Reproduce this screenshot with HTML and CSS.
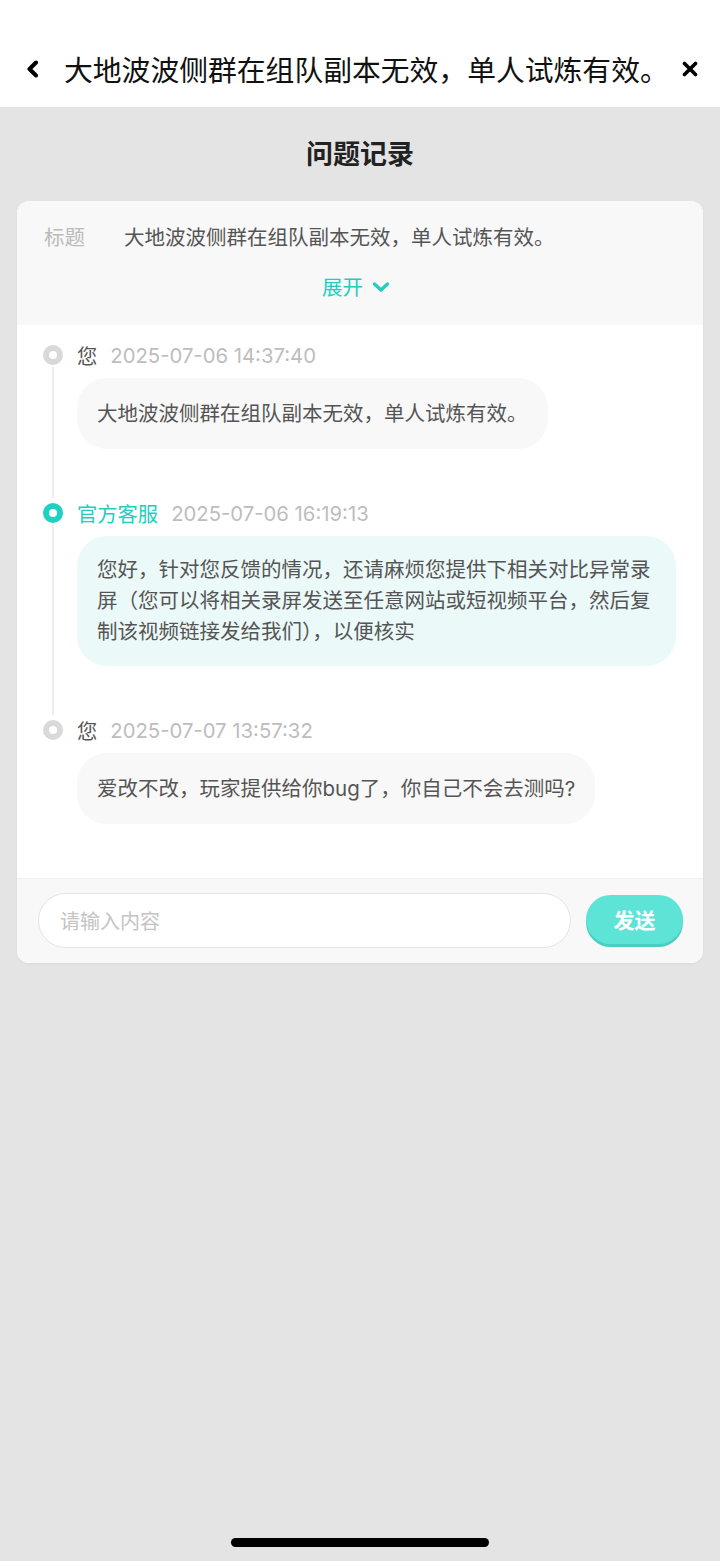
FILE: index.html
```html
<!DOCTYPE html>
<html lang="zh-CN">
<head>
<meta charset="utf-8">
<title>问题记录</title>
<link rel="stylesheet" href="styles.css">
</head>
<body>
<div class="page">
  <header class="topbar">
    <svg class="icon-back" width="14" height="18" viewBox="0 0 14 18"><polyline points="10,2.5 3.5,9 10,15.5" fill="none" stroke="#000" stroke-width="4" stroke-linecap="round" stroke-linejoin="round"/></svg>
    <div class="topbar-title">大地波波侧群在组队副本无效，单人试炼有效。</div>
    <svg class="icon-close" width="16" height="16" viewBox="0 0 16 16"><path d="M2.5 2.5 L13.5 13.5 M13.5 2.5 L2.5 13.5" fill="none" stroke="#000" stroke-width="3.6" stroke-linecap="round"/></svg>
  </header>

  <h1 class="section-heading">问题记录</h1>

  <section class="card">
    <div class="card-summary">
      <div class="summary-row">
        <span class="summary-label">标题</span>
        <span class="summary-text">大地波波侧群在组队副本无效，单人试炼有效。</span>
      </div>
      <div class="expand">
        <span>展开</span>
        <svg width="18" height="12" viewBox="0 0 18 12"><polyline points="2.5,3 9,9 15.5,3" fill="none" stroke="#22cdbf" stroke-width="3.4" stroke-linecap="round" stroke-linejoin="round"/></svg>
      </div>
    </div>

    <div class="timeline">
      <div class="entry">
        <div class="rail"><span class="dot"></span><span class="line"></span></div>
        <div class="entry-body">
          <div class="entry-head"><span class="who">您</span><span class="time">2025-07-06 14:37:40</span></div>
          <div class="bubble">大地波波侧群在组队副本无效，单人试炼有效。</div>
        </div>
      </div>
      <div class="entry">
        <div class="rail"><span class="dot dot-official"></span><span class="line"></span></div>
        <div class="entry-body">
          <div class="entry-head"><span class="who who-official">官方客服</span><span class="time">2025-07-06 16:19:13</span></div>
          <div class="bubble bubble-official">您好，针对您反馈的情况，还请麻烦您提供下相关对比异常录屏（您可以将相关录屏发送至任意网站或短视频平台，然后复制该视频链接发给我们），以便核实</div>
        </div>
      </div>
      <div class="entry entry-last">
        <div class="rail"><span class="dot"></span></div>
        <div class="entry-body">
          <div class="entry-head"><span class="who">您</span><span class="time">2025-07-07 13:57:32</span></div>
          <div class="bubble">爱改不改，玩家提供给你bug了，你自己不会去测吗?</div>
        </div>
      </div>
    </div>

    <div class="composer">
      <div class="input">请输入内容</div>
      <button class="send">发送</button>
    </div>
  </section>

  <div class="home-indicator"></div>
</div>
</body>
</html>
```

FILE: styles.css
```css
* { box-sizing: border-box; }
html, body { margin: 0; padding: 0; }
body {
  background: #e4e4e4;
  font-family: "Inter", "Noto Sans CJK SC", sans-serif;
  color: #555;
}
.page {
  min-height: 1561px;
  display: flex;
  flex-direction: column;
}
.topbar {
  height: 107px;
  background: #fff;
  padding: 30px 22px 0 26px;
  display: flex;
  align-items: center;
}
.icon-back { flex: none; }
.topbar-title {
  flex: 1;
  margin-left: 24px;
  font-size: 28.8px;
  color: #111;
  white-space: nowrap;
}
.icon-close { flex: none; }
.section-heading {
  margin: 0;
  height: 94px;
  padding-bottom: 3px;
  display: flex;
  align-items: center;
  justify-content: center;
  font-size: 27px;
  font-weight: 700;
  color: #222;
}
.card {
  margin: 0 17px;
  background: #fff;
  border-radius: 12px;
  overflow: hidden;
  box-shadow: 0 1px 3px rgba(0,0,0,0.05);
}
.card-summary {
  background: #f8f8f8;
  height: 124px;
  padding: 20px 27px 0 27px;
}
.summary-row {
  display: flex;
  align-items: center;
  height: 30px;
  font-size: 20.5px;
}
.summary-label {
  width: 80px;
  color: #bbb;
}
.summary-text { color: #555; }
.expand {
  margin-top: 20px;
  display: flex;
  justify-content: center;
  align-items: center;
  gap: 9px;
  padding-right: 8px;
  color: #22cdbf;
  font-size: 20.5px;
  height: 30px;
}
.expand svg { margin-top: 2px; }
.timeline {
  padding: 15px 27px 0 26px;
}
.entry {
  display: grid;
  grid-template-columns: 20px 1fr;
  column-gap: 14px;
}
.rail {
  display: flex;
  flex-direction: column;
  align-items: center;
}
.dot {
  margin-top: 5px;
  width: 20px;
  height: 20px;
  border-radius: 50%;
  background: #fff;
  border: 6.5px solid #d9d9d9;
  flex: none;
}
.dot-official { border-color: #1fd1c1; }
.line {
  flex: 1;
  width: 2px;
  background: #eeeeee;
  margin-top: 2px;
}
.entry-body {
  padding-bottom: 49px;
  min-width: 0;
}
.entry-last .entry-body { padding-bottom: 54px; }
.entry-head {
  height: 30px;
  display: flex;
  align-items: center;
  gap: 13px;
  font-size: 20.3px;
}
.who { color: #555; }
.who-official { color: #22cdbf; }
.time { color: #bdbdbd; }
.bubble {
  margin-top: 8px;
  width: fit-content;
  max-width: 100%;
  background: #f8f8f8;
  border-radius: 30px;
  padding: 20px 20px;
  font-size: 20.5px;
  line-height: 31px;
  color: #555;
}
.bubble-official {
  background: #ebf9f9;
  padding: 18px 20px 19px;
}
.composer {
  background: #f8f8f8;
  border-top: 1px solid #f0f0f0;
  padding: 14px 20px 15px 21px;
  display: flex;
  align-items: center;
  gap: 15px;
}
.input {
  flex: 1;
  height: 55px;
  border-radius: 28px;
  border: 1.5px solid #e3e3e3;
  background: #fff;
  display: flex;
  align-items: center;
  padding-left: 21px;
  font-size: 20px;
  color: #c4c4c4;
}
.send {
  width: 97px;
  height: 49px;
  border: none;
  border-radius: 25px;
  background: #5ee4d7;
  box-shadow: 0 3px 0 #49cfc1;
  color: #fff;
  font-family: "Noto Sans CJK SC", sans-serif;
  font-size: 21px;
  font-weight: 700;
  padding: 0;
  margin-top: -3px;
}
.home-indicator {
  margin: auto auto 14px;
  width: 258px;
  height: 9px;
  border-radius: 5px;
  background: #000;
}
```
